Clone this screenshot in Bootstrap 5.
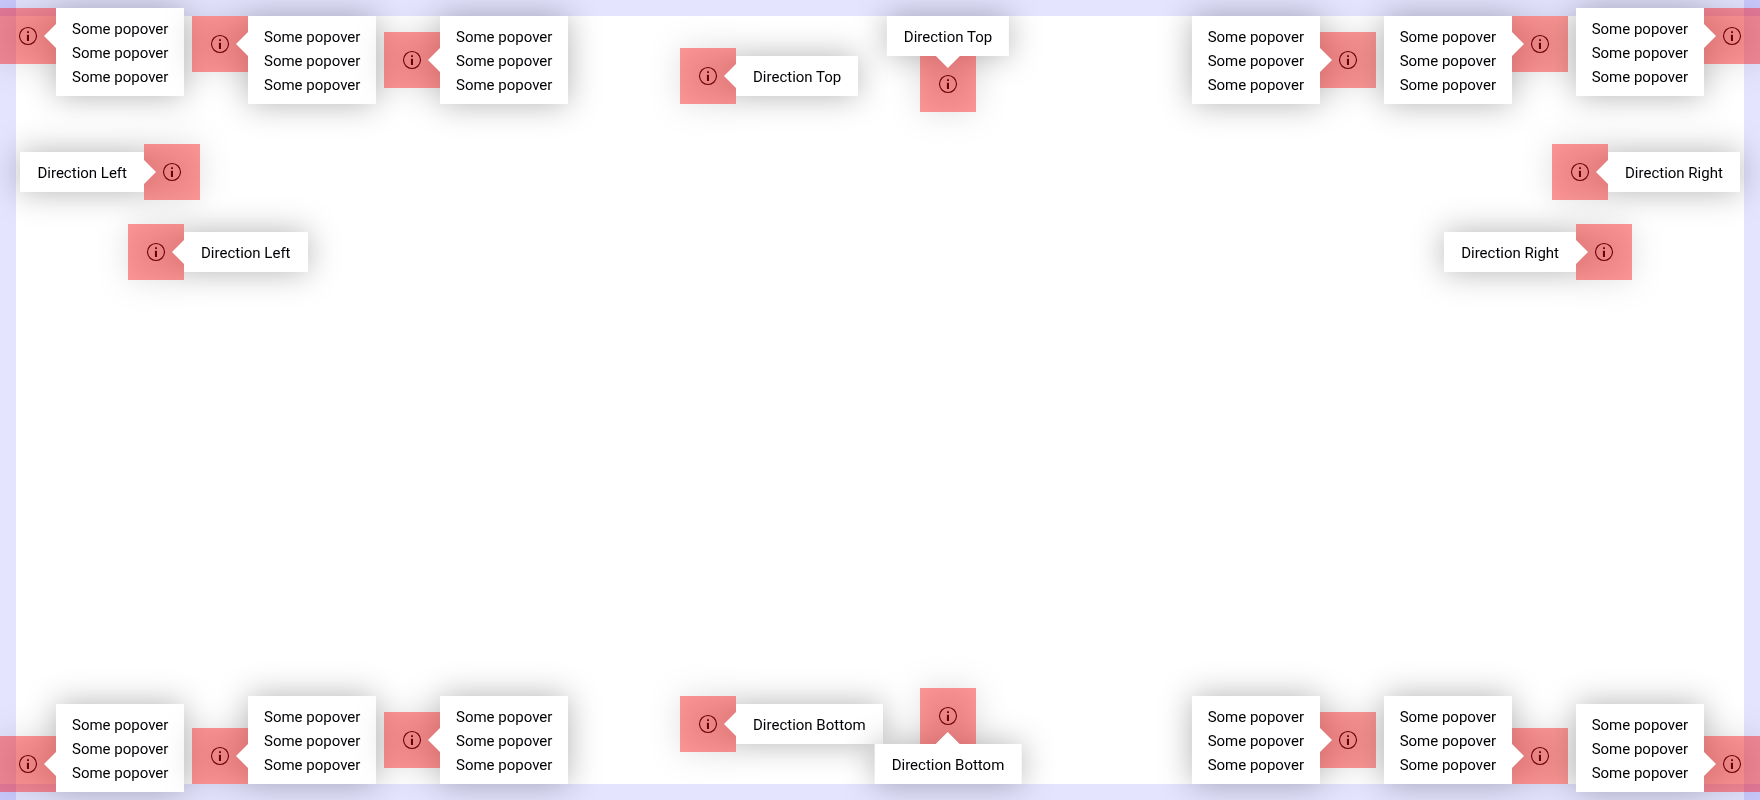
<!DOCTYPE html>
<html lang="en">
<head>
<meta charset="utf-8">
<meta name="viewport" content="width=device-width, initial-scale=1">
<title>Popover directions</title>
<link href="https://cdn.jsdelivr.net/npm/bootstrap@5.3.0/dist/css/bootstrap.min.css" rel="stylesheet">
<style>
  body { font-family: Roboto, "Liberation Sans", sans-serif; font-size: 15px; line-height: 24px; color: #010205; background: #fff; }

  /* translucent safe-zone strips along the window edges */
  .zone { background: rgba(0, 0, 255, .106); pointer-events: none; }
  .zone-x { height: 16px; }
  .zone-y { width: 16px; }

  .stage { overflow: hidden; }
  .stage-band { display: grid; grid-template-columns: 1fr auto 1fr; }
  .group-side { gap: 136px; }
  .group-mid { gap: 184px; padding-right: 104px; }
  .rows { gap: 24px; padding-top: 32px; }

  /* the shadow is cast by the square and its bubble together */
  .spot { width: 56px; height: 56px; background: rgba(255, 0, 0, .4); filter: drop-shadow(0 0 16px rgba(0, 0, 0, .3)); }
  .spot button { width: 24px; height: 24px; color: #670103; }
  .spot svg { width: 24px; height: 24px; }
  .drop-4 { margin-top: 32px; }
  .drop-7 { margin-top: 56px; }
  .lift-4 { margin-bottom: 32px; }
  .lift-7 { margin-bottom: 56px; }
  .in-l1 { margin-left: 144px; }
  .in-l2 { margin-left: 128px; }
  .in-r1 { margin-right: 152px; }
  .in-r2 { margin-right: 128px; }

  /* bubble */
  .tip { position: absolute; padding: 9px 16px 7px; background: #fff; white-space: nowrap; }
  .tip-line { padding-left: 17px; padding-right: 17px; }
  .tip::before { content: ""; position: absolute; border: 12px solid transparent; }
  .tip-right { left: 100%; }
  .tip-left { right: 100%; }
  .tip-right::before { right: 100%; border-left-width: 0; border-right-color: #fff; }
  .tip-left::before { left: 100%; border-right-width: 0; border-left-color: #fff; }
  .at-top { top: 0; }
  .at-top::before { top: 16px; }
  .at-bottom { bottom: 0; }
  .at-bottom::before { bottom: 16px; }
  .at-middle { top: 50%; transform: translateY(-50%); }
  .at-middle::before { top: calc(50% - 12px); }
  .tip-up, .tip-down { left: 50%; transform: translateX(-50%); }
  .tip-up { bottom: 100%; }
  .tip-down { top: 100%; }
  .tip-up::before { top: 100%; left: calc(50% - 12px); border-bottom-width: 0; border-top-color: #fff; }
  .tip-down::before { bottom: 100%; left: calc(50% - 12px); border-top-width: 0; border-bottom-color: #fff; }
</style>
</head>
<body>
<svg class="d-none" aria-hidden="true">
  <symbol id="info" viewBox="0 0 24 24">
    <circle cx="12" cy="12" r="8.5" fill="none" stroke="currentColor" stroke-width="1.1"/>
    <path fill="currentColor" d="M11.1 7.2H13v1.8h-1.9zM10.9 10.7H13V17h-2.1z"/>
  </symbol>
</svg>

<div class="zone zone-x position-fixed z-0 top-0 start-0 end-0"></div>
<div class="zone zone-x position-fixed z-0 bottom-0 start-0 end-0"></div>
<div class="zone zone-y position-fixed z-0 top-0 bottom-0 start-0"></div>
<div class="zone zone-y position-fixed z-0 top-0 bottom-0 end-0"></div>

<main class="stage min-vh-100 d-flex flex-column justify-content-between">
  <div>
    <section class="stage-band align-items-start">
      <div class="group-side d-flex align-items-start">
        <div class="spot mt-2 position-relative d-flex align-items-center justify-content-center"><button type="button" class="btn p-0 border-0 d-flex" aria-label="More information"><svg><use href="#info"/></svg></button><div class="tip tip-right at-top">Some popover<br>Some popover<br>Some popover</div></div>
        <div class="spot mt-3 position-relative d-flex align-items-center justify-content-center"><button type="button" class="btn p-0 border-0 d-flex" aria-label="More information"><svg><use href="#info"/></svg></button><div class="tip tip-right at-top">Some popover<br>Some popover<br>Some popover</div></div>
        <div class="spot drop-4 position-relative d-flex align-items-center justify-content-center"><button type="button" class="btn p-0 border-0 d-flex" aria-label="More information"><svg><use href="#info"/></svg></button><div class="tip tip-right at-middle">Some popover<br>Some popover<br>Some popover</div></div>
      </div>
      <div class="group-mid d-flex align-items-start">
        <div class="spot mt-5 position-relative d-flex align-items-center justify-content-center"><button type="button" class="btn p-0 border-0 d-flex" aria-label="More information"><svg><use href="#info"/></svg></button><div class="tip tip-line tip-right at-middle">Direction Top</div></div>
        <div class="spot drop-7 position-relative d-flex align-items-center justify-content-center"><button type="button" class="btn p-0 border-0 d-flex" aria-label="More information"><svg><use href="#info"/></svg></button><div class="tip tip-line tip-up">Direction Top</div></div>
      </div>
      <div class="group-side d-flex align-items-start justify-content-end">
        <div class="spot drop-4 position-relative d-flex align-items-center justify-content-center"><button type="button" class="btn p-0 border-0 d-flex" aria-label="More information"><svg><use href="#info"/></svg></button><div class="tip tip-left at-middle">Some popover<br>Some popover<br>Some popover</div></div>
        <div class="spot mt-3 position-relative d-flex align-items-center justify-content-center"><button type="button" class="btn p-0 border-0 d-flex" aria-label="More information"><svg><use href="#info"/></svg></button><div class="tip tip-left at-top">Some popover<br>Some popover<br>Some popover</div></div>
        <div class="spot mt-2 position-relative d-flex align-items-center justify-content-center"><button type="button" class="btn p-0 border-0 d-flex" aria-label="More information"><svg><use href="#info"/></svg></button><div class="tip tip-left at-top">Some popover<br>Some popover<br>Some popover</div></div>
      </div>
    </section>

    <section class="rows d-flex flex-column">
      <div class="d-flex justify-content-between">
        <div class="spot in-l1 position-relative d-flex align-items-center justify-content-center"><button type="button" class="btn p-0 border-0 d-flex" aria-label="More information"><svg><use href="#info"/></svg></button><div class="tip tip-line tip-left at-middle">Direction Left</div></div>
        <div class="spot in-r1 position-relative d-flex align-items-center justify-content-center"><button type="button" class="btn p-0 border-0 d-flex" aria-label="More information"><svg><use href="#info"/></svg></button><div class="tip tip-line tip-right at-middle">Direction Right</div></div>
      </div>
      <div class="d-flex justify-content-between">
        <div class="spot in-l2 position-relative d-flex align-items-center justify-content-center"><button type="button" class="btn p-0 border-0 d-flex" aria-label="More information"><svg><use href="#info"/></svg></button><div class="tip tip-line tip-right at-middle">Direction Left</div></div>
        <div class="spot in-r2 position-relative d-flex align-items-center justify-content-center"><button type="button" class="btn p-0 border-0 d-flex" aria-label="More information"><svg><use href="#info"/></svg></button><div class="tip tip-line tip-left at-middle">Direction Right</div></div>
      </div>
    </section>
  </div>

  <section class="stage-band align-items-end">
    <div class="group-side d-flex align-items-end">
      <div class="spot mb-2 position-relative d-flex align-items-center justify-content-center"><button type="button" class="btn p-0 border-0 d-flex" aria-label="More information"><svg><use href="#info"/></svg></button><div class="tip tip-right at-bottom">Some popover<br>Some popover<br>Some popover</div></div>
      <div class="spot mb-3 position-relative d-flex align-items-center justify-content-center"><button type="button" class="btn p-0 border-0 d-flex" aria-label="More information"><svg><use href="#info"/></svg></button><div class="tip tip-right at-bottom">Some popover<br>Some popover<br>Some popover</div></div>
      <div class="spot lift-4 position-relative d-flex align-items-center justify-content-center"><button type="button" class="btn p-0 border-0 d-flex" aria-label="More information"><svg><use href="#info"/></svg></button><div class="tip tip-right at-middle">Some popover<br>Some popover<br>Some popover</div></div>
    </div>
    <div class="group-mid d-flex align-items-end">
      <div class="spot mb-5 position-relative d-flex align-items-center justify-content-center"><button type="button" class="btn p-0 border-0 d-flex" aria-label="More information"><svg><use href="#info"/></svg></button><div class="tip tip-line tip-right at-middle">Direction Bottom</div></div>
      <div class="spot lift-7 position-relative d-flex align-items-center justify-content-center"><button type="button" class="btn p-0 border-0 d-flex" aria-label="More information"><svg><use href="#info"/></svg></button><div class="tip tip-line tip-down">Direction Bottom</div></div>
    </div>
    <div class="group-side d-flex align-items-end justify-content-end">
      <div class="spot lift-4 position-relative d-flex align-items-center justify-content-center"><button type="button" class="btn p-0 border-0 d-flex" aria-label="More information"><svg><use href="#info"/></svg></button><div class="tip tip-left at-middle">Some popover<br>Some popover<br>Some popover</div></div>
      <div class="spot mb-3 position-relative d-flex align-items-center justify-content-center"><button type="button" class="btn p-0 border-0 d-flex" aria-label="More information"><svg><use href="#info"/></svg></button><div class="tip tip-left at-bottom">Some popover<br>Some popover<br>Some popover</div></div>
      <div class="spot mb-2 position-relative d-flex align-items-center justify-content-center"><button type="button" class="btn p-0 border-0 d-flex" aria-label="More information"><svg><use href="#info"/></svg></button><div class="tip tip-left at-bottom">Some popover<br>Some popover<br>Some popover</div></div>
    </div>
  </section>
</main>
<script src="https://cdn.jsdelivr.net/npm/bootstrap@5.3.0/dist/js/bootstrap.bundle.min.js"></script>
</body>
</html>
